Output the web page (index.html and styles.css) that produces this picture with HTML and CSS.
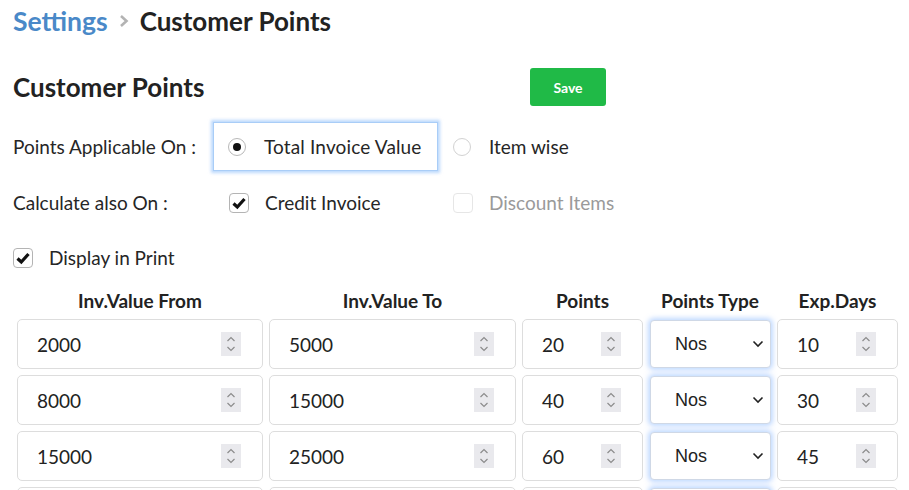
FILE: index.html
```html
<!DOCTYPE html>
<html>
<head>
<meta charset="utf-8">
<link rel="stylesheet" href="styles.css">
</head>
<body>
<div class="page">
  <div class="crumbs">
    <span class="crumb-link">Settings</span>
    <svg class="crumb-sep" width="12" height="14" viewBox="0 0 12 14"><path d="M3 2 L8.5 7 L3 12" fill="none" stroke="#b3b3b3" stroke-width="2.6"/></svg>
    <span class="crumb-current">Customer Points</span>
  </div>

  <div class="head-row">
    <h1 class="title">Customer Points</h1>
    <button class="save">Save</button>
  </div>

  <div class="form-row">
    <div class="label">Points Applicable On :</div>
    <div class="opt opt-first focus"><span class="radio checked"></span><span>Total Invoice Value</span></div>
    <div class="opt"><span class="radio"></span><span>Item wise</span></div>
  </div>

  <div class="form-row row2">
    <div class="label">Calculate also On :</div>
    <div class="opt opt-first"><span class="check on"><svg width="18" height="18" viewBox="0 0 18 18"><path d="M3.5 9.5 L7.3 13 L14.5 5" fill="none" stroke="#111" stroke-width="3.2"/></svg></span><span>Credit Invoice</span></div>
    <div class="opt disabled"><span class="check off"></span><span>Discount Items</span></div>
  </div>

  <div class="form-row row3">
    <div class="opt-plain"><span class="check on"><svg width="18" height="18" viewBox="0 0 18 18"><path d="M3.5 9.5 L7.3 13 L14.5 5" fill="none" stroke="#111" stroke-width="3.2"/></svg></span><span>Display in Print</span></div>
  </div>

  <div class="grid head">
    <div class="th">Inv.Value From</div>
    <div class="th">Inv.Value To</div>
    <div class="th">Points</div>
    <div class="th">Points Type</div>
    <div class="th">Exp.Days</div>
  </div>

  <div class="grid body">
    <div class="num"><span class="val">2000</span><span class="spin"><svg width="20" height="24" viewBox="0 0 20 24"><path d="M6.5 9 L10 5.5 L13.5 9 M6.5 15 L10 18.5 L13.5 15" fill="none" stroke="#8c8c8c" stroke-width="1.2"/></svg></span></div>
    <div class="num"><span class="val">5000</span><span class="spin"><svg width="20" height="24" viewBox="0 0 20 24"><path d="M6.5 9 L10 5.5 L13.5 9 M6.5 15 L10 18.5 L13.5 15" fill="none" stroke="#8c8c8c" stroke-width="1.2"/></svg></span></div>
    <div class="num"><span class="val">20</span><span class="spin"><svg width="20" height="24" viewBox="0 0 20 24"><path d="M6.5 9 L10 5.5 L13.5 9 M6.5 15 L10 18.5 L13.5 15" fill="none" stroke="#8c8c8c" stroke-width="1.2"/></svg></span></div>
    <div class="sel"><span class="sel-val">Nos</span><svg class="caret" width="12" height="8" viewBox="0 0 12 8"><path d="M1.5 1.5 L6 6 L10.5 1.5" fill="none" stroke="#222" stroke-width="1.6"/></svg></div>
    <div class="num"><span class="val">10</span><span class="spin"><svg width="20" height="24" viewBox="0 0 20 24"><path d="M6.5 9 L10 5.5 L13.5 9 M6.5 15 L10 18.5 L13.5 15" fill="none" stroke="#8c8c8c" stroke-width="1.2"/></svg></span></div>

    <div class="num"><span class="val">8000</span><span class="spin"><svg width="20" height="24" viewBox="0 0 20 24"><path d="M6.5 9 L10 5.5 L13.5 9 M6.5 15 L10 18.5 L13.5 15" fill="none" stroke="#8c8c8c" stroke-width="1.2"/></svg></span></div>
    <div class="num"><span class="val">15000</span><span class="spin"><svg width="20" height="24" viewBox="0 0 20 24"><path d="M6.5 9 L10 5.5 L13.5 9 M6.5 15 L10 18.5 L13.5 15" fill="none" stroke="#8c8c8c" stroke-width="1.2"/></svg></span></div>
    <div class="num"><span class="val">40</span><span class="spin"><svg width="20" height="24" viewBox="0 0 20 24"><path d="M6.5 9 L10 5.5 L13.5 9 M6.5 15 L10 18.5 L13.5 15" fill="none" stroke="#8c8c8c" stroke-width="1.2"/></svg></span></div>
    <div class="sel"><span class="sel-val">Nos</span><svg class="caret" width="12" height="8" viewBox="0 0 12 8"><path d="M1.5 1.5 L6 6 L10.5 1.5" fill="none" stroke="#222" stroke-width="1.6"/></svg></div>
    <div class="num"><span class="val">30</span><span class="spin"><svg width="20" height="24" viewBox="0 0 20 24"><path d="M6.5 9 L10 5.5 L13.5 9 M6.5 15 L10 18.5 L13.5 15" fill="none" stroke="#8c8c8c" stroke-width="1.2"/></svg></span></div>

    <div class="num"><span class="val">15000</span><span class="spin"><svg width="20" height="24" viewBox="0 0 20 24"><path d="M6.5 9 L10 5.5 L13.5 9 M6.5 15 L10 18.5 L13.5 15" fill="none" stroke="#8c8c8c" stroke-width="1.2"/></svg></span></div>
    <div class="num"><span class="val">25000</span><span class="spin"><svg width="20" height="24" viewBox="0 0 20 24"><path d="M6.5 9 L10 5.5 L13.5 9 M6.5 15 L10 18.5 L13.5 15" fill="none" stroke="#8c8c8c" stroke-width="1.2"/></svg></span></div>
    <div class="num"><span class="val">60</span><span class="spin"><svg width="20" height="24" viewBox="0 0 20 24"><path d="M6.5 9 L10 5.5 L13.5 9 M6.5 15 L10 18.5 L13.5 15" fill="none" stroke="#8c8c8c" stroke-width="1.2"/></svg></span></div>
    <div class="sel"><span class="sel-val">Nos</span><svg class="caret" width="12" height="8" viewBox="0 0 12 8"><path d="M1.5 1.5 L6 6 L10.5 1.5" fill="none" stroke="#222" stroke-width="1.6"/></svg></div>
    <div class="num"><span class="val">45</span><span class="spin"><svg width="20" height="24" viewBox="0 0 20 24"><path d="M6.5 9 L10 5.5 L13.5 9 M6.5 15 L10 18.5 L13.5 15" fill="none" stroke="#8c8c8c" stroke-width="1.2"/></svg></span></div>

    <div class="num"></div>
    <div class="num"></div>
    <div class="num"></div>
    <div class="sel"></div>
    <div class="num"></div>
  </div>
</div>
</body>
</html>
```

FILE: styles.css
```css
html, body {
  margin: 0;
  padding: 0;
  background: #ffffff;
  overflow: hidden;
}
body {
  font-family: Lato, "Noto Sans", sans-serif;
  color: #222222;
  width: 909px;
  height: 490px;
}
.page {
  padding: 0 0 0 13px;
}
.crumbs {
  height: 42px;
  display: flex;
  align-items: center;
  font-size: 26px;
  font-weight: 700;
  line-height: 42px;
}
.crumb-link {
  color: #4a89c8;
  font-size: 26.5px;
}
.crumb-sep {
  margin: 0 10px 0 10px;
}
.crumb-current {
  color: #222222;
}
.head-row {
  display: flex;
  align-items: center;
  height: 38px;
  margin-top: 26px;
}
.title {
  margin: 0;
  width: 517px;
  font-size: 26px;
  font-weight: 700;
  color: #222222;
  line-height: 38px;
}
.save {
  width: 76px;
  height: 38px;
  border: none;
  border-radius: 3px;
  background: #20ba47;
  color: #ffffff;
  font-family: Lato, sans-serif;
  font-weight: 700;
  font-size: 14px;
  padding: 0;
}
.form-row {
  display: flex;
  align-items: center;
  height: 49px;
  margin-top: 16px;
  font-size: 19px;
  color: #262626;
}
.row2 {
  margin-top: 7px;
}
.row3 {
  margin-top: 6px;
}
.label {
  width: 200px;
}
.opt {
  display: flex;
  align-items: center;
  gap: 18px;
  height: 49px;
  box-sizing: border-box;
  border: 2px solid transparent;
  padding: 0 12px 0 13px;
}
.opt-first {
  width: 225px;
  padding-left: 13px;
}
.opt-first .check {
  margin-left: 1px;
}
.opt .check {
  margin-right: -2px;
}
.focus {
  border: 1px solid #a9cdf7;
  box-shadow: 0 0 3px 2px rgba(150, 195, 250, 0.65);
  padding-left: 14px;
}
.focus span:last-child {
  letter-spacing: 0.15px;
}
.disabled {
  color: #9a9a9a;
}
.opt-plain {
  display: flex;
  align-items: center;
  gap: 16px;
}
.radio {
  width: 18px;
  height: 18px;
  box-sizing: border-box;
  border: 1px solid #d2d2d2;
  border-radius: 50%;
  display: flex;
  align-items: center;
  justify-content: center;
  flex: none;
}
.radio.checked {
  border-color: #b8b8b8;
}
.radio.checked::after {
  content: "";
  width: 8px;
  height: 8px;
  border-radius: 50%;
  background: #111111;
}
.check {
  width: 20px;
  height: 20px;
  box-sizing: border-box;
  border: 1px solid #b4b4b4;
  border-radius: 4px;
  display: flex;
  align-items: center;
  justify-content: center;
  flex: none;
}
.check.off {
  border-color: #e6e6e6;
}
.grid {
  margin-left: 4px;
  display: grid;
  grid-template-columns: 246px 247px 121px 122px 121px;
  column-gap: 6px;
}
.head {
  height: 36px;
}
.body {
  grid-auto-rows: 50px;
  row-gap: 6px;
  margin-top: 1px;
}
.th {
  font-size: 19px;
  font-weight: 700;
  text-align: center;
  line-height: 34px;
  padding-top: 2px;
  color: #222222;
}
.num {
  display: flex;
  align-items: center;
  box-sizing: border-box;
  border: 1px solid #dddddd;
  border-radius: 5px;
  padding: 0 21px 0 19px;
  font-size: 19px;
  color: #222222;
  background: #ffffff;
}
.val {
  flex: 1;
}
.spin {
  width: 20px;
  height: 24px;
  background: #e9e9ed;
  display: flex;
}
.sel {
  align-self: center;
  height: 48px;
  margin-left: 1px;
  display: flex;
  align-items: center;
  box-sizing: border-box;
  border: 1px solid #cfd8e6;
  border-radius: 4px;
  padding: 0 6px 0 24px;
  font-family: "Liberation Sans", Arial, sans-serif;
  font-size: 18px;
  color: #222222;
  background: #ffffff;
  box-shadow: 0 0 5px 2px rgba(130, 180, 255, 0.5);
}
.sel-val {
  flex: 1;
}
.caret {
  flex: none;
}
```
